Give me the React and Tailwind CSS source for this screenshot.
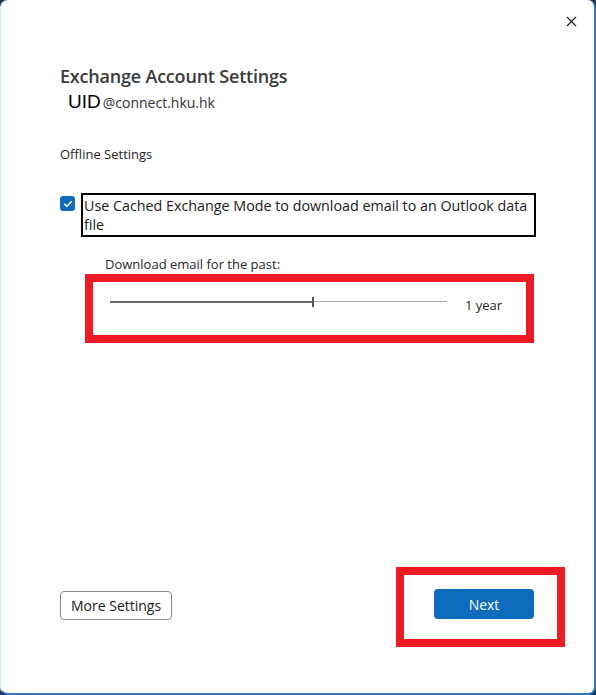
import { X } from "lucide-react";

export default function App() {
  return (
    <div className="w-[596px] h-[695px] bg-[#1b3550] font-['Open_Sans',sans-serif]">
      <div className="relative flex h-full flex-col rounded-[8px] border-r-2 border-b-2 border-l border-[#2f7bc4] border-l-[#cfeff8] bg-white">
        <div className="flex justify-end pt-[13px] pr-[14px]">
          <X className="h-[17px] w-[17px] text-[#1a1a1a]" strokeWidth={1.5} />
        </div>

        <div className="mt-[34px] pl-[59px]">
          <h1 className="text-[18px] font-semibold leading-[24px] tracking-[-0.2px] text-[#3a3a3a]">
            Exchange Account Settings
          </h1>
          <div className="mt-[4px] flex items-baseline pl-[8px]">
            <span className="font-['Liberation_Sans',sans-serif] text-[19px] leading-[20px] text-black">UID</span>
            <span className="ml-[2px] text-[14px] leading-[20px] text-[#333]">@connect.hku.hk</span>
          </div>

          <p className="mt-[32px] text-[13px] leading-[18px] text-[#262626]">Offline Settings</p>

          <div className="mt-[30px] flex items-start">
            <span className="mt-[3px] flex h-[15px] w-[15px] items-center justify-center rounded-[3px] bg-[#0f6cbd]">
              <svg viewBox="0 0 12 12" className="h-[10px] w-[10px]" fill="none">
                <path d="M2 6.3l2.6 2.5L10 3.3" stroke="white" strokeWidth="1.8" strokeLinecap="round" strokeLinejoin="round" />
              </svg>
            </span>
            <div className="ml-[6px] w-[455px] border-2 border-black px-[1px] py-[1px] text-[14.3px] leading-[19px] text-[#1a1a1a]">
              Use Cached Exchange Mode to download email to an Outlook data file
            </div>
          </div>

          <p className="mt-[18px] ml-[45px] text-[13px] leading-[18px] text-[#262626]">Download email for the past:</p>

          <div className="mt-[1px] ml-[25px] flex h-[69px] w-[449px] items-start border-[8px] border-[#ed1c24] pt-[14px]">
            <div className="relative ml-[17px] mt-[1px] h-[10px] w-[337px]">
              <div className="absolute top-[4px] left-0 h-[2px] w-[203px] bg-[#6b6b6b]" />
              <div className="absolute top-[4px] left-[203px] h-[1px] w-[134px] bg-[#a8a8a8]" />
              <div className="absolute top-[0px] left-[202px] h-[10px] w-[2px] bg-[#555]" />
            </div>
            <span className="ml-[18px] text-[13px] leading-[18px] text-[#262626]">1 year</span>
          </div>
        </div>

        <div className="mt-auto mb-[46px] flex items-end justify-between pl-[59px] pr-[29px]">
          <button className="mb-[27px] h-[29px] rounded-[4px] border border-[#8a8a8a] px-[10px] text-[14px] text-[#1a1a1a]">
            More Settings
          </button>
          <div className="flex h-[80px] w-[169px] items-start border-[8px] border-[#ed1c24] pt-[14px] pl-[30px]">
            <button className="h-[30px] w-[100px] rounded-[4px] bg-[#0f6cbd] text-[14px] text-white">
              Next
            </button>
          </div>
        </div>
      </div>
    </div>
  );
}
